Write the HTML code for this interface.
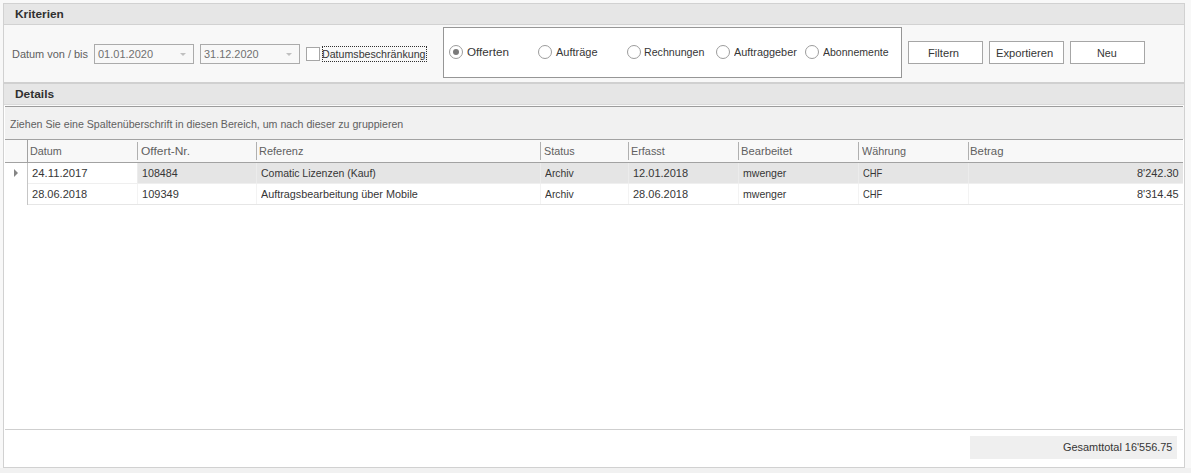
<!DOCTYPE html>
<html><head><meta charset="utf-8"><title>Offerten</title>
<style>
*{box-sizing:border-box;margin:0;padding:0}
html,body{width:1191px;height:473px;overflow:hidden;background:#f8f8f8}
body{font-family:"Liberation Sans",sans-serif;font-size:11px}
.a{position:absolute}
.t{position:absolute;line-height:13px;white-space:nowrap;transform-origin:0 0}
</style></head><body>
<div class="a" style="left:0px;top:468px;width:1191px;height:5px;background:#f1f1f1;"></div>
<div class="a" style="left:3px;top:3px;width:1182px;height:465px;background:#f8f8f8;border:1px solid #d1d1d1;"></div>
<div class="a" style="left:4px;top:4px;width:1180px;height:20px;background:#e6e6e6;"></div>
<div class="a" style="left:4px;top:24px;width:1180px;height:1px;background:#d2d2d2;"></div>
<div class="a" style="left:4px;top:82px;width:1180px;height:2px;background:#d0d0d0;"></div>
<div class="a" style="left:4px;top:84px;width:1180px;height:20px;background:#e6e6e6;"></div>
<div class="a" style="left:4px;top:104px;width:1180px;height:1px;background:#dadada;"></div>
<div class="a" style="left:4px;top:105px;width:1180px;height:1px;background:#fbfbfb;"></div>
<div class="a" style="left:4px;top:106px;width:1180px;height:361px;background:#ffffff;"></div>
<div class="a" style="left:5px;top:106px;width:1178px;height:1px;background:#9c9c9c;"></div>
<div class="a" style="left:5px;top:107px;width:1179px;height:32px;background:#f1f1f1;"></div>
<div class="a" style="left:5px;top:139px;width:1178px;height:1px;background:#a2a2a2;"></div>
<div class="a" style="left:5px;top:140px;width:1178px;height:22px;background:#f8f8f8;"></div>
<div class="a" style="left:5px;top:162px;width:1178px;height:1px;background:#a2a2a2;"></div>
<div class="a" style="left:94px;top:44px;width:100px;height:20px;background:#f8f8f8;border:1px solid #ababab;"></div>
<div class="a" style="left:180px;top:53px;width:0;height:0;border-left:3px solid transparent;border-right:3px solid transparent;border-top:3px solid #c0c0c0"></div>
<div class="a" style="left:200px;top:44px;width:100px;height:20px;background:#f8f8f8;border:1px solid #ababab;"></div>
<div class="a" style="left:286px;top:53px;width:0;height:0;border-left:3px solid transparent;border-right:3px solid transparent;border-top:3px solid #c0c0c0"></div>
<div class="a" style="left:306px;top:47px;width:14px;height:14px;background:#ffffff;border:1px solid #a6a6a6;"></div>
<div class="a" style="left:322px;top:46px;width:105px;height:16px;border:1px dotted #303030;"></div>
<div class="a" style="left:443px;top:27px;width:459px;height:51px;background:#ffffff;border:1px solid #969696;"></div>
<div class="a" style="left:449px;top:45px;width:14px;height:14px;background:#ffffff;border:1px solid #9c9c9c;border-radius:50%;"></div>
<div class="a" style="left:453px;top:49px;width:6px;height:6px;background:#7a7a7a;border-radius:50%;"></div>
<div class="a" style="left:538px;top:45px;width:14px;height:14px;background:#ffffff;border:1px solid #9c9c9c;border-radius:50%;"></div>
<div class="a" style="left:627px;top:45px;width:14px;height:14px;background:#ffffff;border:1px solid #9c9c9c;border-radius:50%;"></div>
<div class="a" style="left:716px;top:45px;width:14px;height:14px;background:#ffffff;border:1px solid #9c9c9c;border-radius:50%;"></div>
<div class="a" style="left:805px;top:45px;width:14px;height:14px;background:#ffffff;border:1px solid #9c9c9c;border-radius:50%;"></div>
<div class="a" style="left:908px;top:41px;width:75px;height:23px;background:#ffffff;border:1px solid #a6a6a6;"></div>
<div class="a" style="left:989px;top:41px;width:75px;height:23px;background:#ffffff;border:1px solid #a6a6a6;"></div>
<div class="a" style="left:1070px;top:41px;width:75px;height:23px;background:#ffffff;border:1px solid #a6a6a6;"></div>
<div class="a" style="left:27px;top:139px;width:1px;height:24px;background:#a2a2a2;"></div>
<div class="a" style="left:27px;top:163px;width:1px;height:42px;background:#c6c6c6;"></div>
<div class="a" style="left:138px;top:163px;width:1045px;height:20px;background:#e5e5e5;"></div>
<div class="a" style="left:137px;top:142px;width:1px;height:18px;background:#b0b0b0;"></div>
<div class="a" style="left:137px;top:163px;width:1px;height:20px;background:#ececec;"></div>
<div class="a" style="left:137px;top:184px;width:1px;height:20px;background:#f3f3f3;"></div>
<div class="a" style="left:256px;top:142px;width:1px;height:18px;background:#b0b0b0;"></div>
<div class="a" style="left:256px;top:163px;width:1px;height:20px;background:#ececec;"></div>
<div class="a" style="left:256px;top:184px;width:1px;height:20px;background:#f3f3f3;"></div>
<div class="a" style="left:540px;top:142px;width:1px;height:18px;background:#b0b0b0;"></div>
<div class="a" style="left:540px;top:163px;width:1px;height:20px;background:#ececec;"></div>
<div class="a" style="left:540px;top:184px;width:1px;height:20px;background:#f3f3f3;"></div>
<div class="a" style="left:628px;top:142px;width:1px;height:18px;background:#b0b0b0;"></div>
<div class="a" style="left:628px;top:163px;width:1px;height:20px;background:#ececec;"></div>
<div class="a" style="left:628px;top:184px;width:1px;height:20px;background:#f3f3f3;"></div>
<div class="a" style="left:738px;top:142px;width:1px;height:18px;background:#b0b0b0;"></div>
<div class="a" style="left:738px;top:163px;width:1px;height:20px;background:#ececec;"></div>
<div class="a" style="left:738px;top:184px;width:1px;height:20px;background:#f3f3f3;"></div>
<div class="a" style="left:858px;top:142px;width:1px;height:18px;background:#b0b0b0;"></div>
<div class="a" style="left:858px;top:163px;width:1px;height:20px;background:#ececec;"></div>
<div class="a" style="left:858px;top:184px;width:1px;height:20px;background:#f3f3f3;"></div>
<div class="a" style="left:968px;top:142px;width:1px;height:18px;background:#b0b0b0;"></div>
<div class="a" style="left:968px;top:163px;width:1px;height:20px;background:#ececec;"></div>
<div class="a" style="left:968px;top:184px;width:1px;height:20px;background:#f3f3f3;"></div>
<div class="a" style="left:28px;top:183px;width:1155px;height:1px;background:#efefef;"></div>
<div class="a" style="left:28px;top:204px;width:1155px;height:1px;background:#e6e6e6;"></div>
<div class="a" style="left:14px;top:169px;width:0;height:0;border-top:4px solid transparent;border-bottom:4px solid transparent;border-left:4px solid #858585"></div>
<div class="a" style="left:5px;top:429px;width:1178px;height:1px;background:#cfcfcf;"></div>
<div class="a" style="left:970px;top:436px;width:207px;height:23px;background:#efefef;"></div>
<span class="t" style="left:15.00px;top:8px;transform:scaleX(1.0778);color:#303030;font-weight:bold;">Kriterien</span>
<span class="t" style="left:15.00px;top:88px;transform:scaleX(1.0833);color:#303030;font-weight:bold;">Details</span>
<span class="t" style="left:11.71px;top:48px;transform:scaleX(0.9947);color:#606060;">Datum von / bis</span>
<span class="t" style="left:98.00px;top:48px;transform:scaleX(1.0000);color:#707070;">01.01.2020</span>
<span class="t" style="left:204.30px;top:48px;transform:scaleX(0.9927);color:#707070;">31.12.2020</span>
<span class="t" style="left:322.03px;top:48px;transform:scaleX(0.9670);color:#363636;">Datumsbeschränkung</span>
<span class="t" style="left:467.00px;top:46px;transform:scaleX(1.0590);color:#363636;">Offerten</span>
<span class="t" style="left:556.00px;top:46px;transform:scaleX(1.0000);color:#363636;">Aufträge</span>
<span class="t" style="left:644.03px;top:46px;transform:scaleX(0.9672);color:#363636;">Rechnungen</span>
<span class="t" style="left:734.00px;top:46px;transform:scaleX(0.9875);color:#363636;">Auftraggeber</span>
<span class="t" style="left:823.00px;top:46px;transform:scaleX(0.9565);color:#363636;">Abonnemente</span>
<span class="t" style="left:928.48px;top:47px;transform:scaleX(1.0172);color:#363636;">Filtern</span>
<span class="t" style="left:996.18px;top:47px;transform:scaleX(1.0164);color:#363636;">Exportieren</span>
<span class="t" style="left:1096.72px;top:47px;transform:scaleX(0.9789);color:#363636;">Neu</span>
<span class="t" style="left:10.00px;top:118px;transform:scaleX(0.9656);color:#606060;">Ziehen Sie eine Spaltenüberschrift in diesen Bereich, um nach dieser zu gruppieren</span>
<span class="t" style="left:29.52px;top:145px;transform:scaleX(0.9806);color:#606060;">Datum</span>
<span class="t" style="left:140.50px;top:145px;transform:scaleX(1.0886);color:#606060;">Offert-Nr.</span>
<span class="t" style="left:258.60px;top:145px;transform:scaleX(0.9955);color:#606060;">Referenz</span>
<span class="t" style="left:543.90px;top:145px;transform:scaleX(0.9806);color:#606060;">Status</span>
<span class="t" style="left:631.21px;top:145px;transform:scaleX(0.9853);color:#606060;">Erfasst</span>
<span class="t" style="left:740.58px;top:145px;transform:scaleX(1.0184);color:#606060;">Bearbeitet</span>
<span class="t" style="left:862.00px;top:145px;transform:scaleX(0.9841);color:#606060;">Währung</span>
<span class="t" style="left:970.47px;top:145px;transform:scaleX(1.0323);color:#606060;">Betrag</span>
<span class="t" style="left:32.20px;top:167px;transform:scaleX(1.0259);color:#363636;">24.11.2017</span>
<span class="t" style="left:142.13px;top:167px;transform:scaleX(0.9722);color:#363636;">108484</span>
<span class="t" style="left:260.80px;top:167px;transform:scaleX(0.9533);color:#363636;">Comatic Lizenzen (Kauf)</span>
<span class="t" style="left:545.10px;top:167px;transform:scaleX(0.9419);color:#363636;">Archiv</span>
<span class="t" style="left:633.00px;top:167px;transform:scaleX(1.0000);color:#363636;">12.01.2018</span>
<span class="t" style="left:742.80px;top:167px;transform:scaleX(0.9578);color:#363636;">mwenger</span>
<span class="t" style="left:862.70px;top:167px;transform:scaleX(0.8522);color:#363636;">CHF</span>
<span class="t" style="left:1137.40px;top:167px;transform:scaleX(0.9952);color:#363636;">8'242.30</span>
<span class="t" style="left:32.20px;top:188px;transform:scaleX(1.0018);color:#363636;">28.06.2018</span>
<span class="t" style="left:142.10px;top:188px;transform:scaleX(1.0000);color:#363636;">109349</span>
<span class="t" style="left:260.80px;top:188px;transform:scaleX(0.9825);color:#363636;">Auftragsbearbeitung über Mobile</span>
<span class="t" style="left:545.10px;top:188px;transform:scaleX(0.9419);color:#363636;">Archiv</span>
<span class="t" style="left:633.00px;top:188px;transform:scaleX(1.0000);color:#363636;">28.06.2018</span>
<span class="t" style="left:742.80px;top:188px;transform:scaleX(0.9578);color:#363636;">mwenger</span>
<span class="t" style="left:862.70px;top:188px;transform:scaleX(0.8522);color:#363636;">CHF</span>
<span class="t" style="left:1137.40px;top:188px;transform:scaleX(0.9952);color:#363636;">8'314.45</span>
<span class="t" style="left:1062.50px;top:441px;transform:scaleX(0.9918);color:#363636;">Gesamttotal 16'556.75</span>
</body></html>
